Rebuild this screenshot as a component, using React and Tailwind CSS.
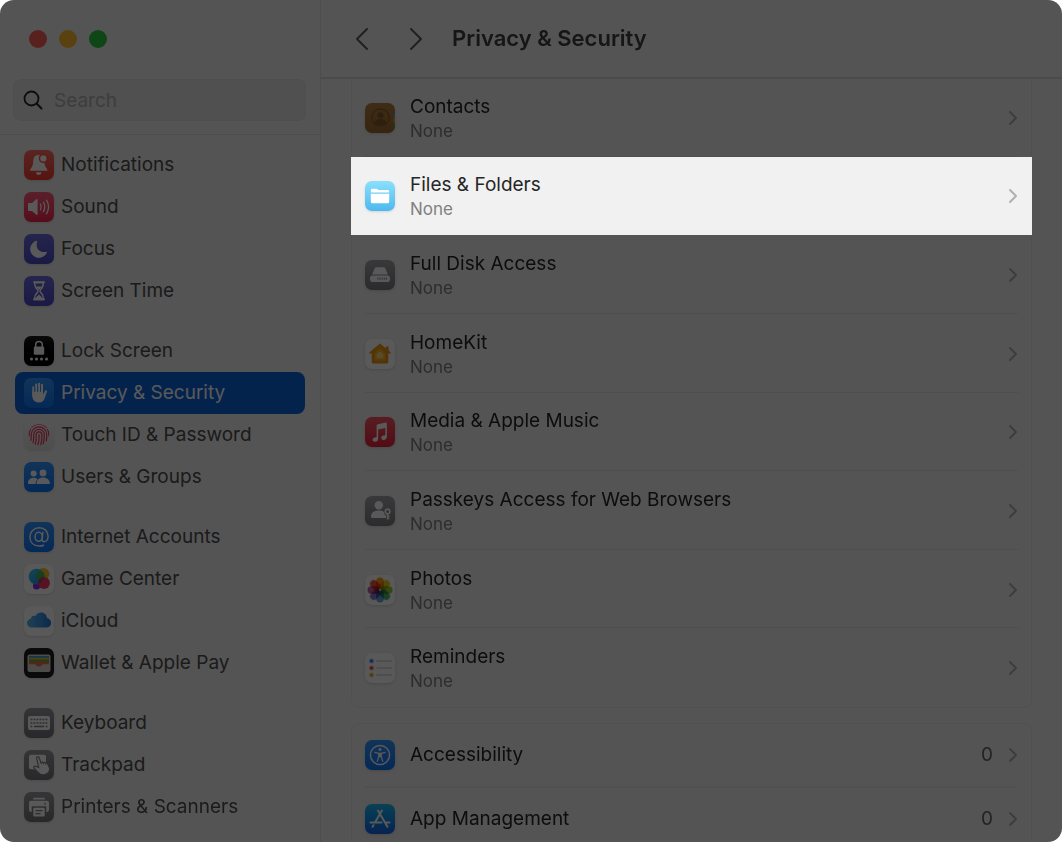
import { useState } from "react";

const PETALS = [
  { angle: 0, fill: "#fb9a12" },
  { angle: 45, fill: "#e3d01c" },
  { angle: 90, fill: "#9bc83c" },
  { angle: 135, fill: "#4fb27b" },
  { angle: 180, fill: "#6aa3dc" },
  { angle: 225, fill: "#8a78c2" },
  { angle: 270, fill: "#c25f9d" },
  { angle: 315, fill: "#f0503a" },
];

function Tile({ tone, children }) {
  return (
    <span className={`block size-[30px] shrink-0 overflow-hidden rounded-[7px] shadow-sm ${tone}`}>
      <svg viewBox="0 0 30 30" className="size-full" fill="#fff" aria-hidden="true">
        {children}
      </svg>
    </span>
  );
}

function NotificationsIcon() {
  return (
    <Tile tone="bg-linear-to-b from-[#ff6a60] to-[#f5382c]">
      <path d="M14.6 5c-3.8 0-5.3 2.900-5.400 6.300-.1 3.800-.7 5-2.700 7.700-.7 1-.3 1.800.8 1.800h15c1.100 0 1.500-.8.8-1.800-2-2.700-2.700-3.900-2.800-7.700C20.200 7.900 18.500 5 14.600 5z" />
      <path d="M12 22.300h5.400a2.700 2.700 0 0 1-5.400 0z" />
      <circle cx="19.400" cy="8.400" r="3.900" stroke="#fb5146" strokeWidth="1.500" />
    </Tile>
  );
}

function SoundIcon() {
  return (
    <Tile tone="bg-linear-to-b from-[#ff5a7d] to-[#f5224e]">
      <path d="M4 12.300c0-.8.5-1.300 1.300-1.300H8l4-3.600c.7-.6 1.600-.2 1.600.7v13.800c0 .9-.9 1.300-1.600.7L8 19H5.300c-.8 0-1.300-.5-1.300-1.300z" />
      <path
        d="M16.500 12.200c.9 1.800.9 3.800 0 5.600M19.400 10.200c1.700 3 1.700 6.600 0 9.600M22.500 8.200c2.600 4.300 2.600 9.300 0 13.600"
        fill="none"
        stroke="#fff"
        strokeWidth="1.300"
        strokeLinecap="round"
      />
    </Tile>
  );
}

function FocusIcon() {
  return (
    <Tile tone="bg-linear-to-b from-[#6c69dc] to-[#4c49c4]">
      <path d="M12.500 6.700c.5-.2.900.2.700.7-2.200 6.400 2.300 11.800 9 10.300.6-.1.900.3.700.8a8.700 8.700 0 1 1-10.400-11.800z" />
    </Tile>
  );
}

function ScreenTimeIcon() {
  return (
    <Tile tone="bg-linear-to-b from-[#6c69dc] to-[#4c49c4]">
      <path
        d="M10.600 6.500h8.800c0 4.200-.8 5.400-2.900 7.300-.8.8-.8 1.600 0 2.400 2.100 1.900 2.900 3.100 2.900 7.300h-8.800c0-4.200.8-5.400 2.900-7.300.8-.8.8-1.600 0-2.400-2.100-1.900-2.900-3.100-2.900-7.300z"
        fill="none"
        stroke="#fff"
        strokeWidth="1.400"
      />
      <path d="M9.200 5.200h11.600v2H9.200zM9.200 22.200h11.600v2H9.200zM12.100 10.500h5.800L15 14zM11.600 22.500c.5-2 2.400-2.300 3.400-4.200 1 1.900 2.900 2.200 3.400 4.200z" />
    </Tile>
  );
}

function LockIcon() {
  return (
    <Tile tone="bg-linear-to-b from-[#1b1b1b] to-black">
      <rect x="9.800" y="10.600" width="10.400" height="8.200" rx="1.300" />
      <path d="M11.700 11V8.700a3.300 3.300 0 0 1 6.600 0V11" fill="none" stroke="#fff" strokeWidth="1.500" />
      {[7.500, 12.500, 17.500, 22.500].map((x) => (
        <circle key={x} cx={x} cy="23" r="1.500" />
      ))}
    </Tile>
  );
}

function HandIcon() {
  return (
    <Tile tone="bg-linear-to-b from-[#3395ff] to-[#0a76f5]">
      <g stroke="#fff" strokeWidth="2.100" strokeLinecap="round" fill="none">
        <path d="M9.300 9.200V17M12.200 6.600V15M15.100 5.700V15M18 6.900V15" />
      </g>
      <path d="M8.250 13.500h10.800v3.200l2-4c.5-.9 2.200-.5 1.900.7l-2 6.200c-1 3.300-2.700 5-6.100 5-4.400 0-6.600-2.900-6.600-7z" />
      <path d="M10.750 9v5M13.650 7.500v6.500M16.550 7.500v6.500" stroke="#2389fb" strokeWidth=".7" />
    </Tile>
  );
}

function TouchIdIcon() {
  return (
    <Tile tone="bg-linear-to-b from-[#f4f4f4] to-[#dedede]">
      <defs>
        <clipPath id="finger-clip">
          <circle cx="15" cy="14.800" r="10.600" />
        </clipPath>
      </defs>
      <g fill="none" stroke="#f0355a" strokeWidth="1.200" strokeLinecap="round" clipPath="url(#finger-clip)">
        <path d="M7.600 7.300a10 10 0 0 1 14.800 0M5 16c0-2.500.4-4.700 1.500-6.700M25 16c0-2.500-.4-4.700-1.500-6.700" />
        <path d="M6.700 20.500c.8-2 .4-3.700.6-6a7.700 7.700 0 0 1 15.400 0c.1 2.600 0 4.200-.4 6.500" />
        <path d="M8.800 23.200c1.200-3 .7-5.500.9-8.600a5.300 5.300 0 0 1 10.600 0c.1 3.300-.1 5.900-1 9.300" />
        <path d="M11.200 24.500c1.200-3.500.8-6.200.9-9.800a2.900 2.900 0 0 1 5.800 0c.1 4 0 6.800-1.200 10.500" />
        <path d="M15 14.500c.2 4.200 0 7.300-1.200 11" />
      </g>
    </Tile>
  );
}

function UsersIcon() {
  return (
    <Tile tone="bg-linear-to-b from-[#3395ff] to-[#0a76f5]">
      <circle cx="9.600" cy="11.500" r="3" />
      <path d="M4 21.300c0-3.300 2.300-5.500 5.600-5.500 1.600 0 2.900.5 3.900 1.400-1.200 1.100-1.900 2.700-1.900 4.900H5c-.7 0-1-.3-1-.8z" />
      <circle cx="19" cy="10.900" r="3.400" />
      <path d="M12.500 21.200c0-3.500 2.700-5.800 6.500-5.800s6.900 2.300 6.900 5.800c0 .6-.4.9-1 .9H13.500c-.6 0-1-.3-1-.9z" />
    </Tile>
  );
}

function InternetIcon() {
  return (
    <Tile tone="bg-linear-to-b from-[#3395ff] to-[#0a76f5]">
      <g fill="none" stroke="#fff" strokeWidth="1.500" strokeLinecap="round">
        <ellipse cx="14.700" cy="14.800" rx="3.700" ry="4.500" />
        <path d="M18.800 10.600l-.7 6.400c-.2 1.800.7 2.700 2 2.700 2.300 0 4-2.300 4-5.500 0-5-3.700-8.400-8.800-8.400-5.600 0-9.400 3.900-9.400 9.200 0 5.500 3.700 9 9.300 9 1.600 0 3-.2 4.300-.8" />
      </g>
    </Tile>
  );
}

function GameCenterIcon() {
  return (
    <Tile tone="bg-white">
      <defs>
        <linearGradient id="gc-blue" x1="0" y1="0" x2="1" y2="1">
          <stop offset="0" stopColor="#2fd0e8" />
          <stop offset="1" stopColor="#2f7ff0" />
        </linearGradient>
      </defs>
      <circle cx="19.300" cy="10" r="6" fill="#f5c518" />
      <circle cx="12.500" cy="22" r="3.600" fill="#8d2be0" />
      <circle cx="12.600" cy="12.600" r="7.900" fill="url(#gc-blue)" />
      <path d="M13.900 7.400a6 6 0 0 1 6.600 5.500 8 8 0 0 1-1.500 4.400 6 6 0 0 1-5.100-9.900z" fill="#46b34c" />
      <circle cx="20" cy="19" r="5.900" fill="#f4376a" />
      <path d="M14.200 18a6 6 0 0 1 5.500-4.900 8 8 0 0 1-5.500 7.200z" fill="#a9455f" />
    </Tile>
  );
}

function ICloudIcon() {
  return (
    <Tile tone="bg-white">
      <defs>
        <linearGradient id="cloud" x1="0" y1="0" x2="1" y2="0">
          <stop offset="0" stopColor="#5cb9ee" />
          <stop offset="1" stopColor="#1f78e0" />
        </linearGradient>
      </defs>
      <path
        d="M8 21.600c-2.900 0-5-1.900-5-4.500 0-2.300 1.600-4 3.900-4.400.1-2.300 2.500-3.700 4.600-2.700 1-2.200 3-3.600 5.500-3.600 3.400 0 5.800 2.400 6 5.600 2.500.6 4.100 2.500 4.100 4.900 0 2.700-2 4.700-4.800 4.700z"
        fill="url(#cloud)"
      />
    </Tile>
  );
}

function WalletIcon() {
  return (
    <Tile tone="bg-[#1d1d1d]">
      <rect x="3.500" y="6.500" width="23" height="17.500" rx="2" fill="#dcd8cb" />
      <path d="M5 8h20v3H5z" fill="#3b9fd8" />
      <path d="M5 9.700h20v2.600H5z" fill="#f0b429" />
      <path d="M5 11.500h20v2.600H5z" fill="#55b04f" />
      <path d="M5 13.500h20v2.700h-5.500c-1 0-1.200.4-1.800 1.200-1.300 1.500-4.100 1.500-5.400 0-.6-.8-.8-1.200-1.800-1.200H5z" fill="#ef6a55" />
    </Tile>
  );
}

function KeyboardIcon() {
  return (
    <Tile tone="bg-linear-to-b from-[#98989d] to-[#747479]">
      <rect x="4" y="8" width="22" height="14" rx="2" />
      <g stroke="#85858a" strokeWidth="1.500">
        <path d="M6.500 11.500h17M6.500 15h17" strokeDasharray="1.900 1.100" />
        <path d="M6.500 18.500h1.800M10 18.500h10M21.700 18.500h1.800" />
      </g>
    </Tile>
  );
}

function TrackpadIcon() {
  return (
    <Tile tone="bg-linear-to-b from-[#98989d] to-[#747479]">
      <rect x="5" y="4.800" width="17" height="14.500" rx="1.800" />
      <path
        d="M12.700 8.300c-.5-1.500 1.700-2.300 2.300-.8l2 5.100c.7-.8 1.700-.7 2.200.2.900-.7 1.800-.5 2.300.4 1-.5 1.900-.1 2.300.8l1.400 3.300c1.200 3-.5 6.100-3.800 7.100-2.900.9-5.300.1-7.300-2l-4-4.200c-.9-1.100.3-2.500 1.600-1.900l3 1.300z"
        stroke="#85858a"
        strokeWidth="1.200"
      />
      <path d="M17 12.500l.6 1.700M19.200 12.800l.6 1.700M21.500 13.200l.6 1.700" stroke="#85858a" strokeWidth=".9" />
    </Tile>
  );
}

function PrinterIcon() {
  return (
    <Tile tone="bg-linear-to-b from-[#98989d] to-[#747479]">
      <path d="M9 7.300c0-.9.600-1.500 1.500-1.500h9c.9 0 1.500.600 1.500 1.500v.3H9z" />
      <path d="M7.200 8.800h15.600c1.300 0 2.200.9 2.200 2.200v6.800c0 1.300-.9 2.200-2.200 2.200h-.5v-5.700H7.700V20h-.5C5.900 20 5 19.100 5 17.800V11c0-1.300.9-2.200 2.200-2.200z" />
      <rect x="9.300" y="15.800" width="11.400" height="8.700" rx="1" />
      <circle cx="21" cy="11.800" r=".9" fill="#85858a" />
      <path d="M11.500 18.700h7M11.500 21.600h5" stroke="#808085" strokeWidth="1.200" />
    </Tile>
  );
}

function ContactsIcon() {
  return (
    <Tile tone="bg-linear-to-b from-[#b57f42] to-[#9c6a30]">
      <circle cx="15.500" cy="14.500" r="8.700" fill="none" stroke="#855826" strokeWidth="1.200" />
      <circle cx="15.500" cy="12.200" r="3" fill="#855826" />
      <path d="M9.500 19.700c1-2.500 3.300-3.700 6-3.700s5 1.200 6 3.700a8.500 8.500 0 0 1-12 0z" fill="#855826" />
      <path d="M28.600 10H30v5h-1.400z" fill="#4aa5e0" />
      <path d="M28.600 15H30v5h-1.400z" fill="#f09a2a" />
      <path d="M28.600 20H30v5h-1.400z" fill="#44ad52" />
    </Tile>
  );
}

function FilesIcon() {
  return (
    <Tile tone="bg-linear-to-b from-[#8ae0fb] to-[#4cb8ef]">
      <path d="M5.800 11.500V9.300c0-1 .600-1.600 1.600-1.600h3.700c.6 0 .9.200 1.300.6.400.4.700.6 1.300.6h8.900c1 0 1.600.600 1.600 1.600v1z" />
      <path d="M5.800 12.800h18.400v7.700c0 1.100-.7 1.800-1.800 1.800H7.600c-1.100 0-1.800-.7-1.800-1.800z" />
    </Tile>
  );
}

function DiskIcon() {
  return (
    <Tile tone="bg-linear-to-b from-[#a3a3a8] to-[#7c7c81]">
      <path d="M9.700 8.400c.3-.8.800-1.200 1.700-1.200h7.200c.9 0 1.400.4 1.700 1.200l2.700 6.200H7z" />
      <rect x="5" y="15.400" width="20" height="6.600" rx="2.800" />
      <path d="M12.500 18.700h9.500" stroke="#8a8a8f" strokeWidth="2.200" strokeDasharray="1 1.100" />
    </Tile>
  );
}

function HomeIcon() {
  return (
    <Tile tone="bg-white">
      <path d="M15 4.500l-10.500 8.700c-.5.5-.2 1.300.5 1.300h1.700V23c0 1 .6 1.600 1.600 1.600h13.400c1 0 1.600-.6 1.600-1.600v-8.500H25c.7 0 1-.8.500-1.300l-1.900-1.600V7.400h-2.800v1.900z" fill="#f0930f" />
      <path d="M15 9.300l-5.500 4.600v7.500h11v-7.500z" fill="#f5b032" />
      <path d="M15 12.500l-3.300 2.800v3.900h6.600v-3.900z" fill="#f8d878" />
    </Tile>
  );
}

function MusicIcon() {
  return (
    <Tile tone="bg-linear-to-b from-[#fb5265] to-[#e8203c]">
      <path d="M11.600 8.800c0-.8.4-1.300 1.200-1.500l8-1.700c.7-.1 1.100.2 1.100.9v13c0 2.100-1.500 3.400-3.300 3.400-1.400 0-2.300-.8-2.300-2 0-1.300.9-2.100 2.500-2.400l1.500-.3v-7.300l-7.100 1.500v9.100c0 2-1.400 3.300-3.200 3.300-1.400 0-2.400-.8-2.400-2 0-1.300.9-2.100 2.500-2.400l1.500-.3z" />
    </Tile>
  );
}

function PasskeysIcon() {
  return (
    <Tile tone="bg-linear-to-b from-[#a3a3a8] to-[#7c7c81]">
      <circle cx="13.800" cy="9.200" r="4.200" />
      <path d="M6 20.600c0-3.700 3.200-6 7.800-6 2.100 0 3.900.5 5.200 1.400 0 1.600.7 2.900 2 3.700v2.200H7.200c-.8 0-1.200-.5-1.200-1.300z" />
      <circle cx="22.600" cy="15.400" r="2.300" fill="none" stroke="#fff" strokeWidth="1.600" />
      <path d="M22.600 17.500v6M22.800 20.300h1.700M22.800 22.600h1.500" stroke="#fff" strokeWidth="1.500" />
    </Tile>
  );
}

function PhotosIcon() {
  return (
    <Tile tone="bg-white">
      {PETALS.map((p) => (
        <rect
          key={p.angle}
          x="11.200"
          y="2.600"
          width="7.600"
          height="11.600"
          rx="3.800"
          fill={p.fill}
          className="mix-blend-multiply"
          transform={`rotate(${p.angle} 15 15)`}
        />
      ))}
    </Tile>
  );
}

function RemindersIcon() {
  return (
    <Tile tone="bg-white">
      <path d="M11.500 8h15.500M11.500 15h15.500M11.500 22h15.500" stroke="#bdbdbd" strokeWidth="1" />
      <g strokeWidth="1.200">
        <circle cx="6.500" cy="8" r="2" fill="#1f6fe5" stroke="#a9c8f5" />
        <circle cx="6.500" cy="15" r="2" fill="#e8352e" stroke="#f5b1ae" />
        <circle cx="6.500" cy="22" r="2" fill="#f0921e" stroke="#f7d3a6" />
      </g>
    </Tile>
  );
}

function AccessibilityIcon() {
  return (
    <Tile tone="bg-linear-to-b from-[#3395ff] to-[#0a76f5]">
      <circle cx="15" cy="15" r="9.600" fill="none" stroke="#fff" strokeWidth="1.500" />
      <circle cx="15" cy="9.600" r="1.500" />
      <path
        d="M9.900 12.400l3.900.9v3.200l-1.500 4.900M20.100 12.400l-3.900.9v3.200l1.500 4.900"
        fill="none"
        stroke="#fff"
        strokeWidth="1.300"
        strokeLinecap="round"
        strokeLinejoin="round"
      />
      <path d="M13.500 12.700h3v4.500h-3z" />
    </Tile>
  );
}

function AppStoreIcon() {
  return (
    <Tile tone="bg-linear-to-b from-[#1fb9f5] to-[#1763e8]">
      <g stroke="#fff" strokeWidth="2" strokeLinecap="round">
        <path d="M13 6.500l1.300 2.200M17 6.500l-6.600 11.200M15.700 11.200l6.800 11.600M5.500 18.400h11M20.500 18.400h4M8.500 21.200L7.600 22.700" />
      </g>
    </Tile>
  );
}

const GROUPS = [
  [
    { label: "Notifications", Icon: NotificationsIcon },
    { label: "Sound", Icon: SoundIcon },
    { label: "Focus", Icon: FocusIcon },
    { label: "Screen Time", Icon: ScreenTimeIcon },
  ],
  [
    { label: "Lock Screen", Icon: LockIcon },
    { label: "Privacy & Security", Icon: HandIcon },
    { label: "Touch ID & Password", Icon: TouchIdIcon },
    { label: "Users & Groups", Icon: UsersIcon },
  ],
  [
    { label: "Internet Accounts", Icon: InternetIcon },
    { label: "Game Center", Icon: GameCenterIcon },
    { label: "iCloud", Icon: ICloudIcon },
    { label: "Wallet & Apple Pay", Icon: WalletIcon },
  ],
  [
    { label: "Keyboard", Icon: KeyboardIcon },
    { label: "Trackpad", Icon: TrackpadIcon },
    { label: "Printers & Scanners", Icon: PrinterIcon },
  ],
];

const PERMISSIONS = [
  { label: "Contacts", Icon: ContactsIcon },
  { label: "Files & Folders", Icon: FilesIcon, spotlight: true },
  { label: "Full Disk Access", Icon: DiskIcon },
  { label: "HomeKit", Icon: HomeIcon },
  { label: "Media & Apple Music", Icon: MusicIcon },
  { label: "Passkeys Access for Web Browsers", Icon: PasskeysIcon },
  { label: "Photos", Icon: PhotosIcon },
  { label: "Reminders", Icon: RemindersIcon },
];

const CONTROLS = [
  { label: "Accessibility", Icon: AccessibilityIcon, count: 0 },
  { label: "App Management", Icon: AppStoreIcon, count: 0 },
];

function Chevron() {
  return (
    <svg viewBox="0 0 10 16" className="h-4 w-[10px] shrink-0" fill="none" aria-hidden="true">
      <path d="M2 2l6 6-6 6" stroke="#b0b0b0" strokeWidth="2" strokeLinecap="round" strokeLinejoin="round" />
    </svg>
  );
}

export default function App() {
  const [selected, setSelected] = useState("Privacy & Security");
  const [query, setQuery] = useState("");

  return (
    <div className="relative flex h-screen overflow-hidden rounded-[14px] bg-[#f1f1f1] font-['Inter','Liberation_Sans',sans-serif] text-[#262626]">
      <aside className="flex w-[321px] shrink-0 flex-col border-r border-[#dcdcdc]">
        <div className="flex h-[78px] shrink-0 items-center gap-3 px-[29px]">
          <button type="button" aria-label="Close" className="size-[18px] rounded-full bg-[#ff5f57]" />
          <button type="button" aria-label="Minimize" className="size-[18px] rounded-full bg-[#febc2e]" />
          <button type="button" aria-label="Zoom" className="size-[18px] rounded-full bg-[#28c840]" />
        </div>

        <div className="border-b border-[#dcdcdc] pt-px pr-[14px] pb-[13px] pl-[13px]">
          <label className="flex h-[42px] items-center gap-[11px] rounded-lg border border-[#dedede] bg-[#e4e4e4] pl-[9px]">
            <svg viewBox="0 0 20 20" className="size-5 shrink-0" fill="none" aria-hidden="true">
              <circle cx="8.500" cy="8.500" r="7" stroke="#262626" strokeWidth="1.800" />
              <path d="M13.800 13.800l4.700 4.700" stroke="#262626" strokeWidth="2" strokeLinecap="round" />
            </svg>
            <input
              type="text"
              aria-label="Search"
              placeholder="Search"
              value={query}
              onChange={(e) => setQuery(e.target.value)}
              className="min-w-0 flex-1 bg-transparent pt-[2px] text-[19px] outline-none placeholder:text-[#b0b0b0]"
            />
          </label>
        </div>

        <nav className="flex flex-col gap-[18px] px-[15px] pt-[9px]">
          {GROUPS.map((group) => (
            <div key={group[0].label}>
              {group.map(({ label, Icon }) => (
                <button
                  key={label}
                  type="button"
                  onClick={() => setSelected(label)}
                  className={[
                    "flex h-[42px] w-full items-center gap-[7px] rounded-lg px-[9px] text-left text-[19px] whitespace-nowrap",
                    selected === label ? "bg-[#0a66dc] text-white" : "text-[#4d4d4d]",
                  ].join(" ")}
                >
                  <Icon />
                  {label}
                </button>
              ))}
            </div>
          ))}
        </nav>
      </aside>

      <main className="flex min-w-0 flex-1 flex-col overflow-hidden">
        <header className="relative flex h-[79px] shrink-0 items-center border-b-2 border-[#d8d8d8] pl-[34px]">
          <button type="button" aria-label="Back">
            <svg viewBox="0 0 14 24" className="h-6 w-[14px]" fill="none" stroke="#5c5c5c" strokeWidth="2" strokeLinecap="round" strokeLinejoin="round">
              <path d="M12 2L2 12l10 10" />
            </svg>
          </button>
          <button type="button" aria-label="Forward" className="ml-10">
            <svg viewBox="0 0 14 24" className="h-6 w-[14px]" fill="none" stroke="#5c5c5c" strokeWidth="2" strokeLinecap="round" strokeLinejoin="round">
              <path d="M2 2l10 10L2 22" />
            </svg>
          </button>
          <h1 className="ml-[29px] text-[22px] font-semibold text-[#404040]">Privacy &amp; Security</h1>
        </header>

        <div className="-mt-px flex flex-col gap-[15px] pr-[30px] pl-[30px]">
          <section className="grid h-[630px] shrink-0 grid-rows-8 rounded-b-lg border border-t-0 border-[#e6e6e6] bg-[#efefef]">
            {PERMISSIONS.map(({ label, Icon, spotlight }, i) => (
              <button
                key={label}
                type="button"
                className={[
                  "flex text-left",
                  spotlight ? "relative z-20 -mx-px bg-[#f1f1f1] px-[14px]" : "px-[13px]",
                ].join(" ")}
              >
                <span
                  className={[
                    "flex min-w-0 flex-1 items-center gap-[15px] border-b pt-[2px]",
                    spotlight || i === PERMISSIONS.length - 1 ? "border-transparent" : "border-[#e0e0e0]",
                  ].join(" ")}
                >
                  <Icon />
                  <span className="flex min-w-0 flex-1 flex-col pt-[2px]">
                    <span className="text-[19px] leading-6">{label}</span>
                    <span className="text-[17px] leading-6 text-[#808080]">None</span>
                  </span>
                  <Chevron />
                </span>
              </button>
            ))}
          </section>

          <section className="shrink-0 rounded-t-lg border border-b-0 border-[#e6e6e6] bg-[#efefef] px-[13px]">
            {CONTROLS.map(({ label, Icon, count }) => (
              <button
                key={label}
                type="button"
                className="flex h-16 w-full items-center gap-[15px] border-b-2 border-[#e8e8e8] text-left text-[19px]"
              >
                <Icon />
                <span className="flex-1">{label}</span>
                <span className="text-[#666666]">{count}</span>
                <Chevron />
              </button>
            ))}
          </section>
        </div>
      </main>

      {/* dims everything except the spotlighted row */}
      <div className="pointer-events-none absolute inset-0 z-10 bg-black/65" />
    </div>
  );
}
